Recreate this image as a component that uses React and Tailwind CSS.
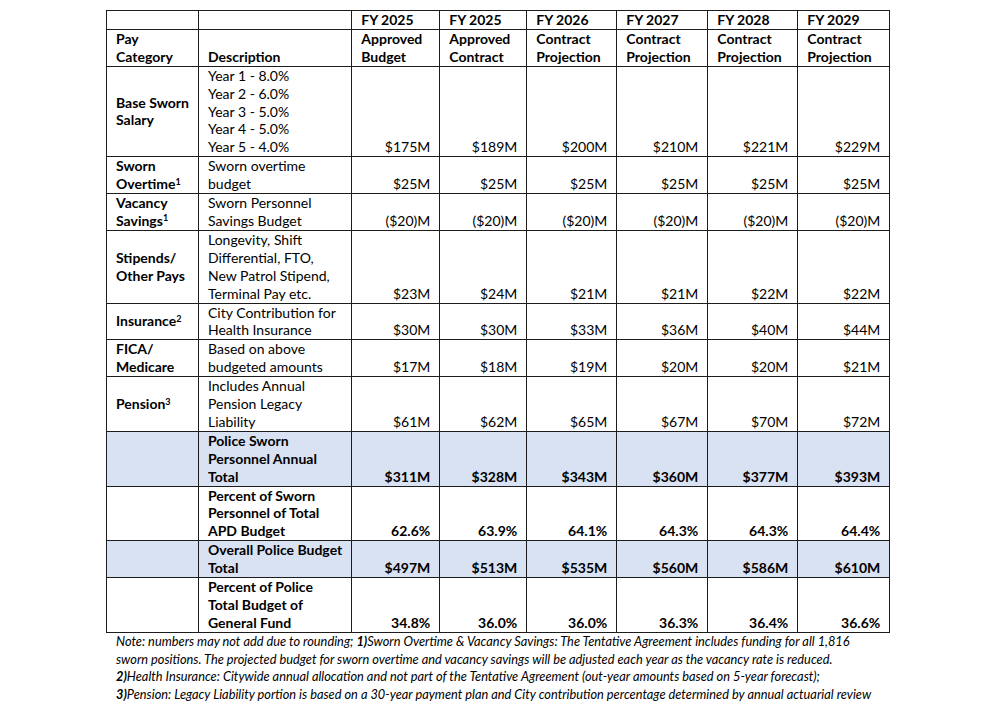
import React from 'react';

const years = [
    ['FY 2025', 'Approved', 'Budget'],
    ['FY 2025', 'Approved', 'Contract'],
    ['FY 2026', 'Contract', 'Projection'],
    ['FY 2027', 'Contract', 'Projection'],
    ['FY 2028', 'Contract', 'Projection'],
    ['FY 2029', 'Contract', 'Projection'],
];

const rows = [
    { cat: ['Base Sworn', 'Salary'], desc: ['Year 1 - 8.0%', 'Year 2 - 6.0%', 'Year 3 - 5.0%', 'Year 4 - 5.0%', 'Year 5 - 4.0%'], vals: ['$175M', '$189M', '$200M', '$210M', '$221M', '$229M'] },
    { cat: ['Sworn', 'Overtime'], sup: '1', desc: ['Sworn overtime', 'budget'], vals: ['$25M', '$25M', '$25M', '$25M', '$25M', '$25M'] },
    { cat: ['Vacancy', 'Savings'], sup: '1', desc: ['Sworn Personnel', 'Savings Budget'], vals: ['($20)M', '($20)M', '($20)M', '($20)M', '($20)M', '($20)M'] },
    { cat: ['Stipends/', 'Other Pays'], desc: ['Longevity, Shift', 'Differential, FTO,', 'New Patrol Stipend,', 'Terminal Pay etc.'], vals: ['$23M', '$24M', '$21M', '$21M', '$22M', '$22M'] },
    { cat: ['Insurance'], sup: '2', desc: ['City Contribution for', 'Health Insurance'], vals: ['$30M', '$30M', '$33M', '$36M', '$40M', '$44M'] },
    { cat: ['FICA/', 'Medicare'], desc: ['Based on above', 'budgeted amounts'], vals: ['$17M', '$18M', '$19M', '$20M', '$20M', '$21M'] },
    { cat: ['Pension'], sup: '3', desc: ['Includes Annual', 'Pension Legacy', 'Liability'], vals: ['$61M', '$62M', '$65M', '$67M', '$70M', '$72M'] },
    { total: true, shade: true, desc: ['Police Sworn', 'Personnel Annual', 'Total'], vals: ['$311M', '$328M', '$343M', '$360M', '$377M', '$393M'] },
    { total: true, desc: ['Percent of Sworn', 'Personnel of Total', 'APD Budget'], vals: ['62.6%', '63.9%', '64.1%', '64.3%', '64.3%', '64.4%'] },
    { total: true, shade: true, desc: ['Overall Police Budget', 'Total'], vals: ['$497M', '$513M', '$535M', '$560M', '$586M', '$610M'] },
    { total: true, desc: ['Percent of Police', 'Total Budget of', 'General Fund'], vals: ['34.8%', '36.0%', '36.0%', '36.3%', '36.4%', '36.6%'] },
];

const colWidths = ['w-[91px]', 'w-[150px]', 'w-[88px]', 'w-[87px]', 'w-[90px]', 'w-[91px]', 'w-[90px]', 'w-[92px]'];

const Lines = ({ items }) =>
    items.map((t, i) => (
        <React.Fragment key={i}>
            {t}
            {i < items.length - 1 && <br />}
        </React.Fragment>
    ));

const cell = 'border border-[#1c1c1c] pl-[9px] pr-[9px] py-0 whitespace-nowrap';

export default function App() {
    return (
        <div className="min-h-[703px] w-[1000px] bg-white text-black font-['Lato',sans-serif]">
            <div className="pl-[106px] pt-[10px]">
                <table className="table-fixed border-collapse text-[14px] leading-[17.9px]">
                    <colgroup>
                        {colWidths.map((w, i) => (
                            <col key={i} className={w} />
                        ))}
                    </colgroup>
                    <thead>
                        <tr className="font-bold">
                            <td className={cell}></td>
                            <td className={cell}></td>
                            {years.map((y, i) => (
                                <td key={i} className={`${cell} text-left`}>{y[0]}</td>
                            ))}
                        </tr>
                        <tr className="font-bold align-bottom">
                            <td className={cell}>Pay<br />Category</td>
                            <td className={cell}>Description</td>
                            {years.map((y, i) => (
                                <td key={i} className={cell}>{y[1]}<br />{y[2]}</td>
                            ))}
                        </tr>
                    </thead>
                    <tbody>
                        {rows.map((r, i) => (
                            <tr key={i} className={r.shade ? 'bg-[#d9e2f3]' : ''}>
                                <td className={`${cell} align-middle font-bold`}>
                                    {r.cat && (
                                        <>
                                            {r.cat.map((t, j) => (
                                                <React.Fragment key={j}>
                                                    {t}
                                                    {j === r.cat.length - 1 && r.sup && (
                                                        <sup className="text-[9px] leading-none top-[-0.5em]">{r.sup}</sup>
                                                    )}
                                                    {j < r.cat.length - 1 && <br />}
                                                </React.Fragment>
                                            ))}
                                        </>
                                    )}
                                </td>
                                <td className={`${cell} align-top ${r.total ? 'font-bold' : ''}`}>
                                    <Lines items={r.desc} />
                                </td>
                                {r.vals.map((v, j) => (
                                    <td key={j} className={`${cell} align-bottom text-right ${r.total ? 'font-bold' : ''}`}>
                                        {v}
                                    </td>
                                ))}
                            </tr>
                        ))}
                    </tbody>
                </table>
            </div>
            <div className="pl-[116px] pt-0 text-[12.8px] leading-[17.8px] italic whitespace-nowrap">
                Note: numbers may not add due to rounding; <b>1)</b>Sworn Overtime &amp; Vacancy Savings: The Tentative Agreement includes funding for all 1,816
                <br />
                sworn positions. The projected budget for sworn overtime and vacancy savings will be adjusted each year as the vacancy rate is reduced.
                <br />
                <b>2)</b>Health Insurance: Citywide annual allocation and not part of the Tentative Agreement (out-year amounts based on 5-year forecast);
                <br />
                <b>3)</b>Pension: Legacy Liability portion is based on a 30-year payment plan and City contribution percentage determined by annual actuarial review
            </div>
        </div>
    );
}
